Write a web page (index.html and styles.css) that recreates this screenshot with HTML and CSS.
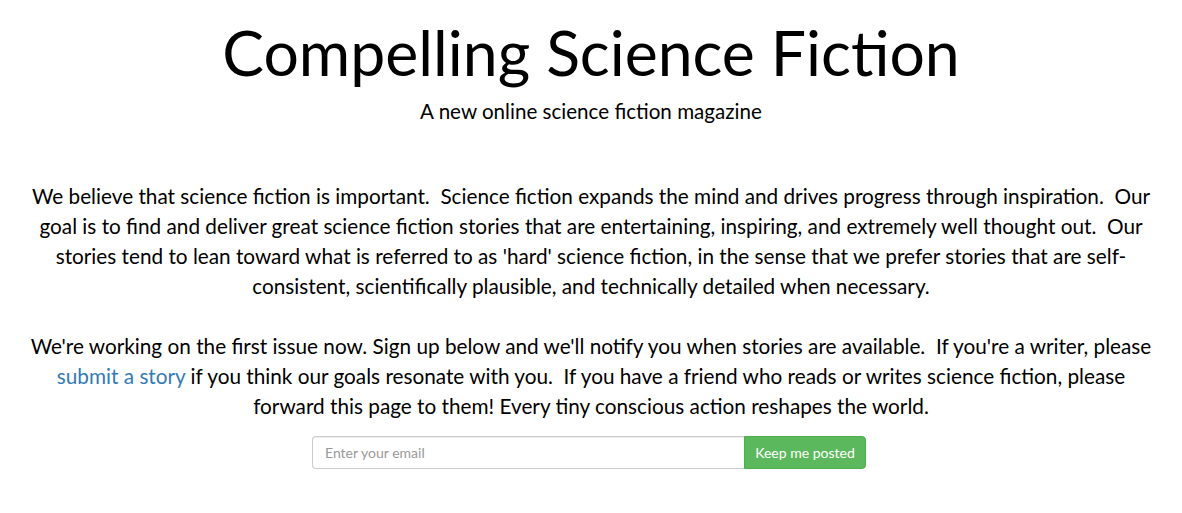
FILE: index.html
```html
<!DOCTYPE html>
<html lang="en">
<head>
  <meta charset="UTF-8" />
  <title>Compelling Science Fiction</title>
  <link rel="stylesheet" href="styles.css">
</head>
<body>
  <div class="container">
    <h1 class="title">Compelling Science Fiction</h1>
    <p class="subtitle">A new online science fiction magazine</p>

    <p class="intro">
      We believe that science fiction is important.&nbsp; Science fiction expands the mind and drives progress through inspiration.&nbsp; Our goal is to find and deliver great science fiction stories that are entertaining, inspiring, and extremely well thought out.&nbsp; Our stories tend to lean toward what is referred to as 'hard' science fiction, in the sense that we prefer stories that are self-consistent, scientifically plausible, and technically detailed when necessary.
    </p>
    <p class="intro">
      We're working on the first issue now. Sign up below and we'll notify you when stories are available.&nbsp; If you're a writer, please <a href="#">submit a story</a> if you think our goals resonate with you.&nbsp; If you have a friend who reads or writes science fiction, please forward this page to them! Every tiny conscious action reshapes the world.
    </p>

    <form class="signup" onsubmit="return false;">
      <input type="email" class="email" placeholder="Enter your email" />
      <button type="submit" class="btn-go">Keep me posted</button>
    </form>
  </div>
</body>
</html>
```

FILE: styles.css
```css
body {
  margin: 0;
  background: #fff;
  color: #000;
  font-family: Lato, "Open Sans", sans-serif;
}
.container {
  width: 1140px;
  padding: 0 15px;
  margin: 0 auto;
  text-align: center;
}
.title {
  font-size: 62.5px;
  font-weight: 400;
  line-height: 1;
  margin: 21px 0 0 0;
}
.subtitle {
  font-size: 20.6px;
  line-height: 30px;
  margin: 12px 0 55px 0;
}
.intro {
  font-size: 20.75px;
  line-height: 30px;
  margin: 0 0 30px 0;
}
.intro:last-of-type {
  margin-bottom: 15px;
}
a {
  color: #337ab7;
  text-decoration: none;
}
.signup {
  display: flex;
  justify-content: center;
  padding-right: 4px;
}
.email {
  width: 432px;
  height: 33px;
  box-sizing: border-box;
  padding: 6px 12px;
  font-family: Lato, sans-serif;
  font-size: 14px;
  border: 1px solid #ccc;
  border-right: none;
  border-radius: 4px 0 0 4px;
  box-shadow: inset 0 1px 1px rgba(0, 0, 0, 0.075);
}
.email::placeholder {
  color: #999;
}
.btn-go {
  height: 33px;
  width: 122px;
  font-family: Lato, sans-serif;
  font-size: 14px;
  color: #fff;
  background-color: #5cb85c;
  border: 1px solid #4cae4c;
  border-radius: 0 4px 4px 0;
  cursor: pointer;
}
```
